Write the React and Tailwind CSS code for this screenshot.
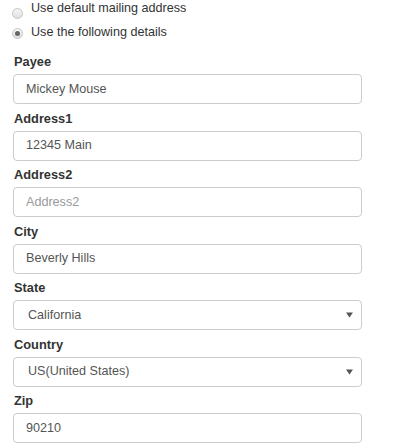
const font = { fontFamily: '"Liberation Sans", Arial, sans-serif' };

const Radio = ({ checked, label, dot }) => (
  <label className="flex items-center h-[17px] text-[12.6px] text-[#333]">
    <span className={`${dot} w-[11px] h-[11px] ml-[12px] mr-[8px] rounded-full border border-[#c4c4c4] bg-gradient-to-b from-[#f6f6f6] to-[#e0e0e0] flex items-center justify-center`}>
      {checked && <span className="w-[5px] h-[5px] rounded-full bg-[#666]" />}
    </span>
    {label}
  </label>
);

const Field = ({ label, value, placeholder, select, first }) => (
  <div className={first ? 'mt-[12px]' : 'mt-[5.5px]'}>
    <div className="h-[18px] leading-[18px] pl-[14px] text-[12.8px] font-bold text-[#333]">{label}</div>
    <div className="mt-[3px] ml-[13px] w-[349px] h-[30px] border border-[#ccc] rounded-[4px] bg-white flex items-center justify-between text-[12.6px]">
      {value ? (
        <span className={select ? 'pl-[14px] text-[#555]' : 'pl-[12px] text-[#555]'}>{value}</span>
      ) : (
        <span className="pl-[12px] text-[#999]">{placeholder}</span>
      )}
      {select && (
        <svg width="7" height="6" viewBox="0 0 7 6" className="mr-[8px]">
          <path d="M0 0.5 L7 0.5 L3.5 5.5 Z" fill="#555" />
        </svg>
      )}
    </div>
  </div>
);

export default function App() {
  return (
    <div className="w-[413px] h-[448px] bg-white overflow-hidden" style={font}>
      <Radio dot="mt-[9px]" label="Use default mailing address" />
      <div className="mt-[7px]">
        <Radio dot="mt-[2px]" checked label="Use the following details" />
      </div>
      <Field first label="Payee" value="Mickey Mouse" />
      <Field label="Address1" value="12345 Main" />
      <Field label="Address2" placeholder="Address2" />
      <Field label="City" value="Beverly Hills" />
      <Field label="State" value="California" select />
      <Field label="Country" value="US(United States)" select />
      <Field label="Zip" value="90210" />
    </div>
  );
}
